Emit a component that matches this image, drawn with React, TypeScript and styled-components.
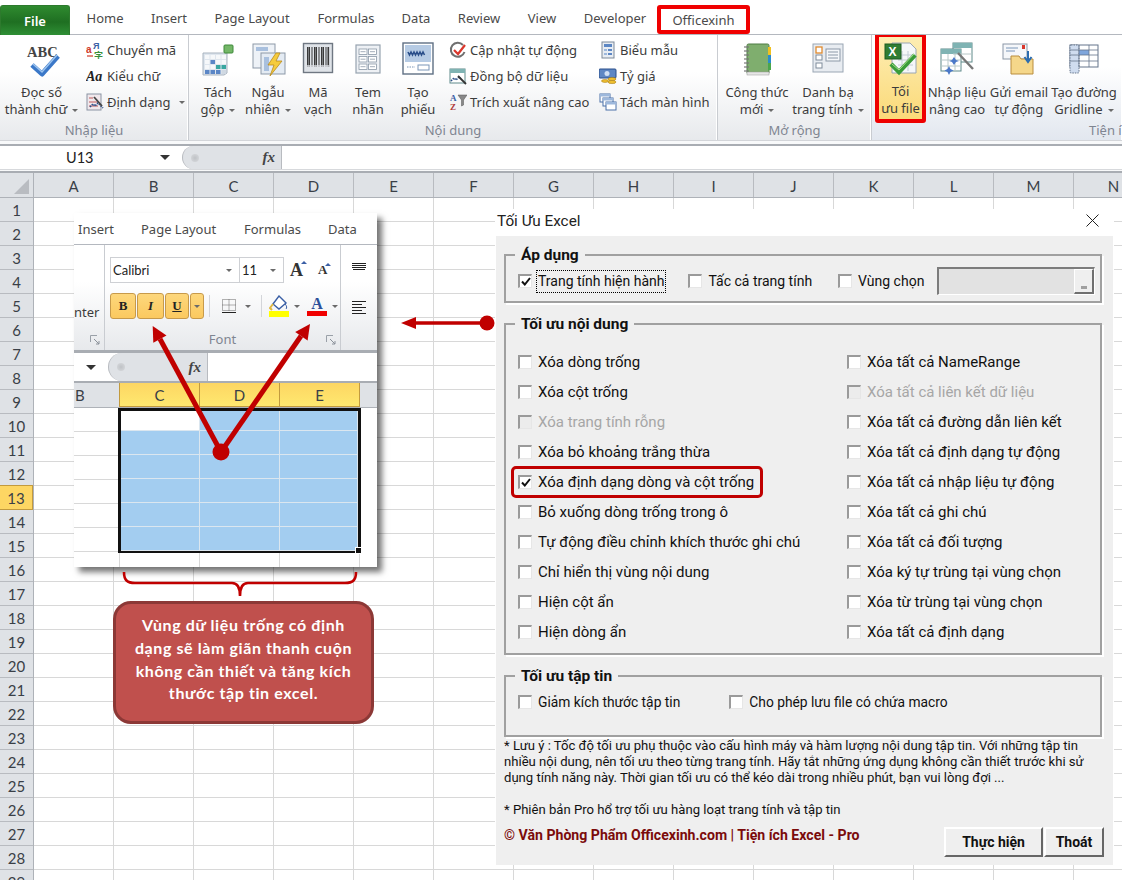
import React from "react";
import styled, { createGlobalStyle } from "styled-components";

const Global = createGlobalStyle`
  html, body { margin: 0; padding: 0; background: #fff; }
  *, *::before, *::after { box-sizing: border-box; }
`;

const UI = `"Noto Sans", "Open Sans", sans-serif`;
const CAL = `Lato, "Noto Sans", sans-serif`;
const DLG = `Roboto, "Noto Sans", sans-serif`;

const Page = styled.div`
  position: relative;
  width: 1122px;
  height: 880px;
  overflow: hidden;
  background: #fff;
  font-family: ${UI};
`;

/* ---------- Top tabs ---------- */
const TabBar = styled.div`
  display: flex;
  height: 35px;
  border-bottom: 1px solid #b4b8bf;
  align-items: flex-end;
`;
const FileTab = styled.div`
  width: 70px;
  height: 30px;
  margin-bottom: -1px;
  display: flex;
  align-items: center;
  justify-content: center;
  color: #fff;
  font-size: 13px;
  font-weight: 600;
  border: 1px solid #2d7a2d;
  border-bottom: none;
  border-radius: 3px 3px 0 0;
  background: linear-gradient(#2f8a2f, #1f6f22 55%, #2f8f35);
`;
const Tab = styled.div<{ $w: number }>`
  width: ${(p) => p.$w}px;
  height: 34px;
  display: flex;
  align-items: center;
  justify-content: center;
  color: #4a4a4a;
  font-size: 13px;
  padding-top: 1px;
`;
const MarkedTab = styled(Tab)`
  height: 29px;
  margin-left: -1px;
  padding-top: 0;
  border: 4px solid #f00000;
  border-radius: 3px;
`;

/* ---------- Ribbon ---------- */
const Ribbon = styled.div`
  display: flex;
  height: 106px;
  background: linear-gradient(#fff 35%, #e7e9ec);
  border-bottom: 1px solid #d3d5d9;
  overflow: hidden;
`;
const Group = styled.div<{ $w: number; $tint?: boolean }>`
  width: ${(p) => p.$w}px;
  flex: none;
  display: flex;
  flex-direction: column;
  border-right: 1px solid #c9ccd1;
  box-shadow: inset -1px 0 0 #fff;
  ${(p) => p.$tint && `background: linear-gradient(#fff 30%, #e2e7ef); border-right: none;`}
`;
const GroupBody = styled.div<{ $pad?: number }>`
  flex: none;
  height: 87px;
  display: flex;
  padding-left: ${(p) => p.$pad ?? 0}px;
  position: relative;
`;
const GroupLabel = styled.div<{ $cx?: string }>`
  height: 18px;
  line-height: 16px;
  text-align: center;
  font-size: 13px;
  color: #7f8591;
  white-space: nowrap;
  padding-left: ${(p) => p.$cx ?? 0};
`;
const BigBtn = styled.div<{ $w: number }>`
  width: ${(p) => p.$w}px;
  flex: none;
  display: flex;
  flex-direction: column;
  align-items: center;
  padding-top: 7px;
  color: #3c3c3c;
  font-size: 13px;
  line-height: 17px;
  text-align: center;
  white-space: nowrap;
`;
const HotBtn = styled(BigBtn)`
  position: relative;
  background: linear-gradient(#fdeeb5, #fbd977);
  outline: 4px solid #ee0000;
  outline-offset: -3px;
  border-radius: 2px;
  margin-top: -1px;
  height: 88px;
`;
const IconSlot = styled.div`
  height: 36px;
  margin-bottom: 6px;
  display: flex;
  align-items: center;
  justify-content: center;
`;
const Caret = styled.span<{ $ml?: number }>`
  display: inline-block;
  width: 0;
  height: 0;
  margin-left: ${(p) => p.$ml ?? 5}px;
  vertical-align: 2px;
  border-left: 3px solid transparent;
  border-right: 3px solid transparent;
  border-top: 3px solid #6a6a6a;
`;
const SmallCol = styled.div<{ $w: number; $pad?: number }>`
  width: ${(p) => p.$w}px;
  flex: none;
  padding: 2px 0 0 ${(p) => p.$pad ?? 0}px;
`;
const SmallBtn = styled.div`
  height: 26px;
  display: flex;
  align-items: center;
  gap: 3px;
  font-size: 13px;
  color: #3c3c3c;
  white-space: nowrap;
`;
const SmallIcon = styled.svg`
  width: 18px;
  height: 18px;
  flex: none;
`;

/* ---------- Formula bar ---------- */
const FormulaBar = styled.div`
  height: 32px;
  padding-top: 3px;
  border-bottom: 2px solid #a9adb3;
  background: #f8f9fa;
`;
const FormulaRow = styled.div`
  display: flex;
  background: #fff;
  border-top: 2px solid #a9adb3;
  height: 26px;
  border-bottom: 1px solid #d7d9dc;
`;
const NameBox = styled.div<{ $w: number; $cx: number }>`
  width: ${(p) => p.$w}px;
  flex: none;
  display: flex;
  align-items: center;
  justify-content: space-between;
  padding: 0 12px 0 ${(p) => p.$cx}px;
  font-family: ${CAL};
  font-size: 14.5px;
  color: #222;
`;
const ArrowBox = styled(NameBox)`
  justify-content: flex-end;
`;
const DownTri = styled.span`
  width: 0;
  height: 0;
  border-left: 5px solid transparent;
  border-right: 5px solid transparent;
  border-top: 5px solid #333;
`;
const FxPill = styled.div`
  width: 100px;
  flex: none;
  display: flex;
  align-items: center;
  justify-content: space-between;
  padding: 0 6px 0 8px;
  background: #dfe2e6;
  border: 1px solid #b8bbc0;
  border-radius: 14px 0 0 14px;
  border-top: none;
  border-bottom: none;
`;
const PillDot = styled.span`
  width: 8px;
  height: 8px;
  border-radius: 50%;
  background: radial-gradient(#bfc2c6, #d9dbde);
`;
const Fx = styled.span`
  font-family: "Liberation Serif", serif;
  font-style: italic;
  font-weight: 700;
  font-size: 15px;
  color: #444;
`;

/* ---------- Sheet ---------- */
const HeaderRow = styled.div`
  display: flex;
  height: 25px;
  background: #dfe2e6;
  border-bottom: 1px solid #aeb2b8;
`;
const Corner = styled.div`
  width: 34px;
  flex: none;
  border-right: 1px solid #aeb2b8;
  position: relative;
  &::after {
    content: "";
    position: absolute;
    right: 4px;
    bottom: 3px;
    border-left: 15px solid transparent;
    border-bottom: 15px solid #b9bcc1;
  }
`;
const ColHead = styled.div`
  width: 80px;
  flex: none;
  border-right: 1px solid #b8bbc0;
  display: flex;
  align-items: center;
  justify-content: center;
  padding-top: 1px;
  font-family: ${CAL};
  font-size: 15px;
  color: #3a3f47;
`;
const SheetBody = styled.div`
  display: flex;
`;
const RowHeads = styled.div`
  width: 34px;
  flex: none;
  border-right: 1px solid #aeb2b8;
`;
const RowHead = styled.div<{ $on?: boolean }>`
  height: 24px;
  display: flex;
  align-items: center;
  justify-content: center;
  font-family: ${CAL};
  font-size: 15px;
  color: #3a3f47;
  background: ${(p) => (p.$on ? "#fdd663" : "#dfe2e6")};
  border-bottom: 1px solid ${(p) => (p.$on ? "#c29a3e" : "#b8bbc0")};
  ${(p) => p.$on && "border-top: 1px solid #c29a3e; margin-top: -1px; height: 25px; border-right: 1px solid #c29a3e;"}
`;
const Cells = styled.div`
  flex: 1;
  background-image:
    linear-gradient(to bottom, transparent 23px, #d8d8d8 23px),
    linear-gradient(to right, transparent 79px, #d8d8d8 79px);
  background-size: 100% 24px, 80px 100%;
`;

/* ---------- Inset picture ---------- */
const Inset = styled.div`
  position: absolute;
  left: 74px;
  top: 213px;
  width: 303px;
  height: 354px;
  background: #fff;
  box-shadow: 5px 5px 6px rgba(0, 0, 0, 0.55);
  overflow: hidden;
  display: flex;
  flex-direction: column;
`;
const InsetTabs = styled.div`
  display: flex;
  flex: none;
  height: 32px;
  padding-left: 4px;
  align-items: center;
  border-bottom: 1px solid #b4b8bf;
`;
const InsetTab = styled.div<{ $w: number }>`
  width: ${(p) => p.$w}px;
  flex: none;
  font-size: 13px;
  color: #4a4a4a;
  white-space: nowrap;
  padding-top: 1px;
`;
const InsetRibbon = styled.div`
  display: flex;
  flex: none;
  height: 105px;
  background: linear-gradient(#fff 35%, #e7e9ec);
`;
const InsetEdge = styled.div<{ $w: number; $bar?: boolean; $top?: number }>`
  width: ${(p) => p.$w}px;
  flex: none;
  position: relative;
  display: flex;
  flex-direction: column;
  ${(p) => p.$bar && "border-right: 1px solid #c9ccd1;"}
  padding-top: ${(p) => p.$top ?? 0}px;
  align-items: center;
  font-size: 13px;
  color: #3c3c3c;
`;
const NterText = styled.div`
  margin-top: 59px;
  align-self: flex-start;
  line-height: 17px;
`;
const Launcher = styled.svg`
  position: absolute;
  right: 4px;
  bottom: 5px;
  width: 10px;
  height: 10px;
`;
const FontGroup = styled.div`
  width: 236px;
  flex: none;
  position: relative;
  border-right: 1px solid #c9ccd1;
  padding: 12px 0 0 5px;
  display: flex;
  flex-direction: column;
`;
const FontRow = styled.div`
  display: flex;
  align-items: center;
  height: 26px;
`;
const Combo = styled.div<{ $w: number }>`
  width: ${(p) => p.$w}px;
  height: 26px;
  flex: none;
  background: #fff;
  border: 1px solid #ced0d4;
  margin-right: -1px;
  display: flex;
  align-items: center;
  justify-content: space-between;
  padding: 0 7px 0 2px;
  font-family: ${CAL};
  font-size: 13px;
  color: #222;
`;
const GrowIcon = styled.span<{ $s: number; $ml: number }>`
  margin-left: ${(p) => p.$ml}px;
  font-family: "Liberation Serif", serif;
  font-weight: 700;
  font-size: ${(p) => p.$s}px;
  color: #333;
  position: relative;
  &::after {
    content: "";
    position: absolute;
    right: -4px;
    top: 1px;
    border-left: 3px solid transparent;
    border-right: 3px solid transparent;
    border-bottom: 3px solid #3a5fa5;
  }
`;
const FormatRow = styled(FontRow)`
  margin-top: 10px;
`;
const FmtBtn = styled.div<{ $w: number; $i?: boolean; $u?: boolean }>`
  width: ${(p) => p.$w}px;
  height: 26px;
  flex: none;
  display: flex;
  align-items: center;
  justify-content: center;
  margin-right: 1px;
  background: linear-gradient(#fdd77c, #fbc95f);
  border: 1px solid #c79a4a;
  border-radius: 3px;
  font-family: "Liberation Serif", serif;
  font-weight: 700;
  font-size: 13px;
  color: #222;
  font-style: ${(p) => (p.$i ? "italic" : "normal")};
  text-decoration: ${(p) => (p.$u ? "underline" : "none")};
`;
const VBar = styled.span<{ $ml: number; $mr: number }>`
  width: 1px;
  height: 22px;
  background: #d3d5d9;
  margin: 0 ${(p) => p.$mr}px 0 ${(p) => p.$ml}px;
`;
const FontColor = styled.svg`
  margin-left: 7px;
`;
const FontLabel = styled.div`
  position: absolute;
  left: 0;
  right: 0;
  bottom: 2px;
  text-align: center;
  font-size: 13px;
  color: #7f8591;
`;
const AlignIcon = styled.svg`
  width: 16px;
  height: 14px;
  margin-bottom: 24px;
`;
const InsetFormula = styled.div`
  display: flex;
  flex: none;
  height: 34px;
  border-top: 3px solid #a9adb3;
  border-bottom: 3px solid #a9adb3;
  background: #fff;
`;
const InsetHeads = styled.div`
  display: flex;
  flex: none;
  height: 25px;
  background: #dfe2e6;
  border-bottom: 1px solid #aeb2b8;
  margin-top: -1px;
`;
const InsetColHead = styled.div<{ $w: number; $on?: boolean }>`
  width: ${(p) => p.$w}px;
  flex: none;
  display: flex;
  align-items: center;
  justify-content: center;
  font-family: ${CAL};
  font-size: 15px;
  color: #3a3f47;
  ${(p) =>
    p.$on &&
    `background: linear-gradient(#fdd663, #fee86f); border-right: 1px solid #c29a3e; border-left: 1px solid #c29a3e; margin-left:-1px; border-bottom: 1px solid #c29a3e;`}
`;
const CutHead = styled(InsetColHead)`
  justify-content: flex-start;
  padding-left: 1px;
`;
const InsetGrid = styled.div`
  flex: 1;
  padding-left: 44px;
  background-image:
    linear-gradient(to right, transparent 45px, #d8d8d8 45px, #d8d8d8 46px, transparent 46px,
      transparent 125px, #d8d8d8 125px, #d8d8d8 126px, transparent 126px,
      transparent 205px, #d8d8d8 205px, #d8d8d8 206px, transparent 206px,
      transparent 285px, #d8d8d8 285px, #d8d8d8 286px, transparent 286px);
`;
const RowTicks = styled.div`
  position: absolute;
  left: 0;
  width: 44px;
  top: 195px;
  height: 144px;
  background-image: linear-gradient(to bottom, transparent 23px, #d8d8d8 23px);
  background-size: 100% 24px;
`;
const Selection = styled.div`
  position: relative;
  width: 243px;
  height: 145px;
  border: 3px solid #111;
  background: #fff;
  display: grid;
  grid-template-columns: 79px 80px 78px;
  grid-template-rows: 20px repeat(5, 24px);
  &::after {
    content: "";
    position: absolute;
    right: -3px;
    bottom: -3px;
    width: 5px;
    height: 5px;
    background: #111;
    outline: 1px solid #fff;
  }
`;
const SelCell = styled.div<{ $w?: boolean }>`
  background: ${(p) => (p.$w ? "#fff" : "#a3cdf0")};
  border-right: 1px solid #dbe6ef;
  border-bottom: 1px solid #dbe6ef;
`;

/* ---------- Annotation ---------- */
const Marks = styled.svg`
  position: absolute;
  left: 0;
  top: 0;
  pointer-events: none;
`;
const Callout = styled.div`
  position: absolute;
  left: 113px;
  top: 601px;
  width: 261px;
  height: 123px;
  padding-bottom: 6px;
  background: #c0504d;
  border: 3px solid #8c3836;
  border-radius: 18px;
  color: #fff;
  font-family: ${CAL};
  font-weight: 700;
  font-size: 16px;
  letter-spacing: 0.6px;
  line-height: 22.6px;
  text-align: center;
  white-space: nowrap;
  display: flex;
  align-items: center;
  justify-content: center;
`;

/* ---------- Dialog ---------- */
const Dialog = styled.div`
  position: absolute;
  left: 495px;
  top: 209px;
  width: 619px;
  height: 656px;
  background: #fff;
  font-family: ${DLG};
  color: #111;
`;
const TitleBar = styled.div`
  height: 27px;
  display: flex;
  align-items: center;
  justify-content: space-between;
  padding: 0 15px 4px 2px;
  font-size: 15.3px;
  color: #222;
`;
const Panel = styled.div`
  margin-left: 1px;
  width: 617px;
  height: 629px;
  background: #efefef;
  padding: 11px 0 0 8px;
`;
const Box = styled.fieldset<{ $h: number; $gap?: number }>`
  width: 598px;
  height: ${(p) => p.$h}px;
  margin: ${(p) => p.$gap ?? 0}px 0 0 0;
  padding: 0 0 0 12px;
  border: 2px solid #a0a0a0;
  min-width: 0;
  box-shadow: 2px 2px 0 #fff;
`;
const Legend = styled.legend`
  margin-left: -3px;
  padding: 0 6px;
  height: 16px;
  line-height: 16px;
  font-size: 15.5px;
  font-weight: 700;
  color: #111;
`;
const ApplyRow = styled.div`
  display: flex;
  align-items: center;
  height: 22px;
  margin-top: 7px;
`;
const Item = styled.label<{ $off?: boolean; $ml?: number; $s?: number; $boxed?: boolean }>`
  position: relative;
  display: flex;
  align-items: center;
  height: 22px;
  gap: 6px;
  font-size: ${(p) => p.$s ?? 15}px;
  white-space: nowrap;
  color: ${(p) => (p.$off ? "#a6a6a6" : "#111")};
  margin-left: ${(p) => p.$ml ?? 0}px;
  ${(p) =>
    p.$boxed &&
    `&::before { content: ""; position: absolute; left: -7px; top: -5px; width: 252px; height: 32px; border: 3px solid #c00000; border-radius: 5px; }`}
`;
const Check = styled.span<{ $off?: boolean }>`
  width: 14px;
  height: 14px;
  flex: none;
  display: flex;
  align-items: center;
  justify-content: center;
  background: ${(p) => (p.$off ? "#ececec" : "#fff")};
  border-top: 2px solid #9a9a9a;
  border-left: 2px solid #9a9a9a;
  border-right: 1px solid #e6e6e6;
  border-bottom: 1px solid #e6e6e6;
`;
const Focused = styled.span`
  outline: 1px dotted #000;
  outline-offset: 1px;
  line-height: 19px;
`;
const RangeBox = styled.div`
  width: 158px;
  height: 28px;
  margin-left: 13px;
  display: flex;
  justify-content: flex-end;
  background: #e2e2e2;
  border-top: 2px solid #7c7c7c;
  border-left: 2px solid #7c7c7c;
  border-right: 1px solid #fff;
  border-bottom: 1px solid #fff;
`;
const RangeBtn = styled.div`
  width: 20px;
  height: 25px;
  border: 1px solid #fff;
  border-right: 2px solid #707070;
  border-bottom: 2px solid #707070;
  background: #efefef;
  display: flex;
  align-items: flex-end;
  justify-content: center;
  padding-bottom: 3px;
  &::after {
    content: "";
    width: 6px;
    height: 3px;
    background: #a0a0a0;
  }
`;
const OptionGrid = styled.div`
  display: grid;
  grid-template-columns: 329px 1fr;
  grid-auto-rows: 30px;
  align-items: center;
  margin-top: 15px;
`;
const Notes = styled.div`
  margin-top: 1px;
  font-size: 13.1px;
  line-height: 16px;
  white-space: nowrap;
  color: #111;
`;
const Spacer = styled.div`
  height: 16px;
`;
const Footer = styled.div`
  display: flex;
  justify-content: space-between;
  width: 600px;
  margin-top: 9px;
`;
const Brand = styled.div`
  font-size: 14.1px;
  font-weight: 700;
  line-height: 16px;
  color: #7b0b0b;
  white-space: nowrap;
`;
const Buttons = styled.div`
  display: flex;
  gap: 1px;
`;
const DlgBtn = styled.div<{ $w: number }>`
  width: ${(p) => p.$w}px;
  height: 30px;
  display: flex;
  align-items: center;
  justify-content: center;
  font-size: 14px;
  font-weight: 700;
  background: #efefef;
  border-top: 2px solid #fff;
  border-left: 2px solid #fff;
  border-right: 2px solid #666;
  border-bottom: 2px solid #666;
`;

/* ---------- Icons ---------- */
const Big = ({ children, w = 36 }: { children: React.ReactNode; w?: number }) => (
  <svg width={w} height={36} viewBox={`0 0 ${w} 36`}>{children}</svg>
);
const IAbc = () => (
  <Big w={40}>
    <text x="5" y="15" fontFamily="Liberation Serif" fontWeight="700" fontSize="14.5" fill="#444">ABC</text>
    <path d="M10 23 L20 32 L36 14" fill="none" stroke="#3b78c8" strokeWidth="5" strokeLinejoin="round" />
    <path d="M11 22 L20 30 L35 13" fill="none" stroke="#9cc4ef" strokeWidth="1.5" />
  </Big>
);
const ISplit = () => (
  <Big>
    <path d="M3 11 H27 V31 L24 33 H3Z" fill="#dfe6ee" stroke="#a8b3bf" />
    {[0, 1, 2, 3].map((r) => [0, 1, 2, 3].map((c) => (
      <rect key={`${r}${c}`} x={5 + c * 5.5} y={13 + r * 5} width="4.5" height="4" fill={r === 3 ? (c === 3 ? "#cfd8e2" : "#5b86c6") : r === 2 && c > 1 ? "#38a6a0" : r === 1 && c === 1 ? "#5b86c6" : "#f6f8fa"} />
    )))}
    <rect x="24" y="3" width="9" height="8" rx="1" fill="#74b768" stroke="#3e8a3a" />
  </Big>
);
const IRandom = () => (
  <Big>
    <rect x="3" y="2" width="22" height="24" fill="#eef2f7" stroke="#8d99a8" />
    <rect x="6" y="5" width="12" height="4" fill="#a9c0de" />
    <rect x="11" y="11" width="24" height="21" fill="#e4ebf3" stroke="#8d99a8" />
    <rect x="14" y="15" width="5" height="14" fill="#a9c0de" />
    <path d="M26 11 L18 23 H24 L20 34 L32 19 H26 L30 11Z" fill="#f5cb3d" stroke="#b98a1e" strokeWidth=".8" />
  </Big>
);
const IBarcode = () => (
  <Big w={32}>
    <rect x="1.5" y="1.5" width="29" height="29" fill="#dfe3e8" stroke="#6f7782" strokeWidth="1.4" />
    {[5, 7, 9.5, 12, 14, 16.5, 19, 21, 23.5, 25.5].map((x, i) => (
      <rect key={x} x={x} y="5" width={i % 3 === 0 ? 1.6 : 1} height="20" fill="#3a3a3a" />
    ))}
    <rect x="5" y="23" width="22" height="3" fill="#dfe3e8" opacity=".7" />
  </Big>
);
const ILabel = () => (
  <Big w={28}>
    <rect x="2" y="3" width="24" height="28" fill="#eef1f5" stroke="#97a3b0" strokeWidth="1.2" />
    {[0, 1, 2].map((r) => [0, 1].map((c) => (
      <g key={`${r}${c}`}>
        <rect x={5 + c * 9.5} y={7 + r * 7.5} width="8" height="5.5" fill="#fff" stroke="#8b98a7" strokeWidth=".8" />
        <path d={`M${6.5 + c * 9.5} ${9.7 + r * 7.5}h5`} stroke="#8b98a7" strokeWidth=".8" />
      </g>
    )))}
  </Big>
);
const ITicket = () => (
  <Big w={32}>
    <rect x="1" y="1" width="30" height="31" fill="#fff" stroke="#5f6f84" strokeWidth="1.4" />
    <rect x="3" y="3" width="26" height="17" fill="#b6cbe4" />
    <path d="M6 10 l1.5 3 1.5 -3 1.5 3 1.5 -3 1.5 3 1.5 -3 1.5 3 1.5 -3 1.5 3 1.5 -3 1.5 3" stroke="#2b4f8a" strokeWidth="1.6" fill="none" />
    <path d="M5 25 h8" stroke="#7b96b8" strokeWidth="1.2" strokeDasharray="1.5 1" />
    <rect x="16" y="23" width="11" height="5" fill="#fff" stroke="#7b96b8" />
  </Big>
);
const INotebook = () => (
  <Big w={30}>
    <rect x="5" y="2" width="22" height="30" rx="1.5" fill="#7fae6e" stroke="#4f7d44" />
    <rect x="5" y="30" width="22" height="3" fill="#e6e6e6" stroke="#999" strokeWidth=".5" />
    <rect x="26" y="5" width="3" height="8" fill="#f0c020" />
    <rect x="26" y="13" width="3" height="8" fill="#2b8ccc" />
    <rect x="26" y="21" width="3" height="7" fill="#4ba64b" />
    {[5, 9, 13, 17, 21, 25, 29].map((y) => <path key={y} d={`M2 ${y}h5`} stroke="#777" strokeWidth="1.2" />)}
  </Big>
);
const IContacts = () => (
  <Big w={32}>
    <rect x="1" y="2" width="30" height="28" fill="#e8ecf1" stroke="#9aa6b3" />
    <rect x="4" y="5" width="6" height="6" fill="#fff" stroke="#e08a2e" strokeWidth="1.3" />
    <rect x="4" y="13" width="6" height="5" fill="#fff" stroke="#7f8c9b" />
    <rect x="4" y="21" width="6" height="5" fill="#fff" stroke="#7f8c9b" />
    <rect x="14" y="7" width="14" height="12" fill="#f5f7fa" stroke="#8b98a7" />
    <path d="M16 10h10M16 13h10M16 16h10" stroke="#8b98a7" />
  </Big>
);
const IOptimize = () => (
  <Big w={34}>
    <path d="M8 2 H26 L32 8 V32 H8Z" fill="#f5f7f9" stroke="#9aa6b3" />
    <path d="M14 14h15M14 19h15M14 24h15M18 10v20M24 10v20" stroke="#c3ccd6" />
    <rect x="1" y="3" width="16" height="15" fill="#2f7d32" stroke="#1d5c20" />
    <text x="4.5" y="15" fontFamily="Liberation Sans" fontWeight="700" fontSize="12" fill="#fff">X</text>
    <path d="M7 23 L15 31 L31 14" fill="none" stroke="#3a9c3a" strokeWidth="4.5" />
    <path d="M8 23 L15 29 L30 13" fill="none" stroke="#a8e08a" strokeWidth="1" />
  </Big>
);
const IAdvanced = () => (
  <Big w={34}>
    <rect x="13" y="1" width="19" height="19" fill="#fff" stroke="#5e8a8a" />
    <rect x="13" y="1" width="19" height="5" fill="#7fb3b3" />
    <rect x="1" y="7" width="20" height="22" fill="#fff" stroke="#5e8a8a" />
    <rect x="1" y="7" width="20" height="5" fill="#7fb3b3" />
    <path d="M1 18h20M1 24h20M8 12v17M15 12v17M13 12h19" stroke="#b8c8c8" />
    <path d="M18 11 L33 27" stroke="#777" strokeWidth="2.4" />
    <path d="M14 15l2 3 3 1-3 1-2 3-2-3-3-1 3-1zM9 24l1.5 3 3 1.5-3 1.5-1.5 3-1.5-3-3-1.5 3-1.5z" fill="#4b78c8" />
  </Big>
);
const IMail = () => (
  <Big w={34}>
    <rect x="1" y="2" width="24" height="15" fill="#f5f7fa" stroke="#8b98a7" />
    <path d="M4 6h12M4 9h9" stroke="#7b96b8" />
    <rect x="20" y="3" width="3" height="4" fill="#d9372c" />
    <path d="M9 14 H17 L19 17 H31 V32 H9Z" fill="#f5d78a" stroke="#b98d3e" />
    <path d="M26 9 V18 M22.5 15 L26 20 L29.5 15" stroke="#2b6cb0" strokeWidth="2" fill="none" />
  </Big>
);
const IGridline = () => (
  <Big w={32}>
    <rect x="2" y="3" width="28" height="22" fill="#fff" stroke="#64748b" />
    <rect x="2" y="3" width="9" height="28" rx="1" fill="#cfdcef" stroke="#64748b" strokeDasharray="1.5 1" />
    <rect x="11" y="8" width="10" height="5" fill="#7fa6dc" />
    <path d="M2 8h28M2 13h28M2 19h28M11 3v22M21 3v22" stroke="#64748b" strokeWidth=".8" />
  </Big>
);
const SConvert = () => (
  <SmallIcon viewBox="0 0 18 18">
    <text x="0" y="12" fontFamily="Liberation Sans" fontWeight="700" fontSize="10" fill="#d0392b">a</text>
    <text x="7" y="8" fontFamily="Liberation Sans" fontWeight="700" fontSize="9" fill="#3a5fa5">Я</text>
    <text x="8" y="18" fontFamily="Noto Sans CJK SC" fontWeight="700" fontSize="9" fill="#3a8f3a">字</text>
    <path d="M1 15h6" stroke="#d0392b" strokeWidth="1.2" />
  </SmallIcon>
);
const SFont = () => (
  <SmallIcon viewBox="0 0 18 18">
    <text x="0" y="14" fontFamily="Liberation Serif" fontStyle="italic" fontWeight="700" fontSize="14" fill="#222">Aa</text>
  </SmallIcon>
);
const SFormat = () => (
  <SmallIcon viewBox="0 0 18 18">
    <rect x="1" y="1" width="14" height="16" fill="#f1e8ec" stroke="#8a94a3" />
    <path d="M3 5h4M3 9h8M3 13h9" stroke="#c05a5a" />
    <path d="M4 14l3-3 2 2 3-3 2 2 3 3" stroke="#2b4f8a" strokeWidth="1.6" fill="none" strokeDasharray="1.5 1" />
    <path d="M8 4 L16 13" stroke="#444" strokeWidth="1.8" />
  </SmallIcon>
);
const SUpdate = () => (
  <SmallIcon viewBox="0 0 18 18">
    <path d="M14 4 A7 7 0 1 0 15.5 11" fill="none" stroke="#6f6f6f" strokeWidth="2" />
    <path d="M5 9 L9 13 L16 4" fill="none" stroke="#d9372c" strokeWidth="2.2" />
  </SmallIcon>
);
const SSync = () => (
  <SmallIcon viewBox="0 0 18 18">
    <rect x="1" y="2" width="15" height="14" fill="#fff" stroke="#5e8a8a" />
    <rect x="1" y="2" width="15" height="4" fill="#7fb3b3" />
    <path d="M2 14l3-3 2 2 3-3 2 2" stroke="#2b4f8a" strokeWidth="1.6" fill="none" strokeDasharray="1.5 1" />
    <path d="M9 9 L17 17" stroke="#333" strokeWidth="1.8" />
  </SmallIcon>
);
const SFilter = () => (
  <SmallIcon viewBox="0 0 18 18">
    <text x="1" y="8" fontFamily="Liberation Serif" fontWeight="700" fontSize="9" fill="#3a5fa5">A</text>
    <text x="1" y="17" fontFamily="Liberation Serif" fontWeight="700" fontSize="9" fill="#b03a3a">Z</text>
    <path d="M9 2 H18 L14.5 7 V12 L12.5 13 V7Z" fill="#888" stroke="#555" strokeWidth=".5" />
  </SmallIcon>
);
const SForm = () => (
  <SmallIcon viewBox="0 0 18 18">
    <rect x="3" y="1" width="12" height="16" fill="#e8edf3" stroke="#7c8999" />
    <rect x="5" y="3" width="8" height="3" fill="#5d87c4" />
    <path d="M5 8h3v2H5zM5 12h3v2H5z" fill="#9db8dc" />
    <path d="M9 8h4v2H9zM9 12h4v2H9z" fill="#5d87c4" />
  </SmallIcon>
);
const SRate = () => (
  <SmallIcon viewBox="0 0 18 18">
    <rect x="0" y="2" width="17" height="9" rx="1" fill="#5d87c4" stroke="#2b4f8a" />
    <circle cx="8" cy="6.5" r="2.5" fill="#cfe0f5" />
    <ellipse cx="13" cy="12" rx="4" ry="1.6" fill="#f0c030" stroke="#a87d18" strokeWidth=".6" />
    <ellipse cx="13" cy="15" rx="4" ry="1.6" fill="#f0c030" stroke="#a87d18" strokeWidth=".6" />
    <ellipse cx="6" cy="14" rx="3.5" ry="1.4" fill="#f0c030" stroke="#a87d18" strokeWidth=".6" />
  </SmallIcon>
);
const SWindows = () => (
  <SmallIcon viewBox="0 0 18 18">
    <rect x="1" y="1" width="10" height="8" fill="#fff" stroke="#4a70a8" />
    <rect x="1" y="1" width="10" height="2.5" fill="#9db8dc" />
    <rect x="4" y="5" width="10" height="8" fill="#fff" stroke="#4a70a8" />
    <rect x="4" y="5" width="10" height="2.5" fill="#9db8dc" />
    <rect x="7" y="9" width="10" height="8" fill="#fff" stroke="#4a70a8" />
    <rect x="7" y="9" width="10" height="2.5" fill="#9db8dc" />
  </SmallIcon>
);
const Tick = () => (
  <svg width="10" height="9" viewBox="0 0 10 9">
    <path d="M1 4.5 L3.8 7.5 L9 1" fill="none" stroke="#111" strokeWidth="2" />
  </svg>
);
const LauncherIcon = () => (
  <Launcher viewBox="0 0 10 10">
    <path d="M.5 .5H7M.5 .5V7" stroke="#9aa0a8" fill="none" />
    <path d="M4 4L9 9M6 9H9V6" stroke="#8a9099" fill="none" />
  </Launcher>
);
const Lines = ({ wide }: { wide?: boolean }) => (
  <AlignIcon viewBox="0 0 16 14">
    {wide ? (
      <path d="M1 1.5h14M1 3.5h14M1 5.5h14M2 7.5h12" stroke="#222" />
    ) : (
      <path d="M1 1.5h14M1 4.5h10M1 7.5h14M1 10.5h10M1 13.5h14" stroke="#222" />
    )}
  </AlignIcon>
);

/* ---------- Data ---------- */
const COLS = "ABCDEFGHIJKLMN".split("");
const ROWS = Array.from({ length: 29 }, (_, i) => i + 1);
const LEFT: [string, boolean?, boolean?][] = [
  ["Xóa dòng trống"],
  ["Xóa cột trống"],
  ["Xóa trang tính rỗng", true],
  ["Xóa bỏ khoảng trắng thừa"],
  ["Xóa định dạng dòng và cột trống", false, true],
  ["Bỏ xuống dòng trống trong ô"],
  ["Tự động điều chỉnh khích thước ghi chú"],
  ["Chỉ hiển thị vùng nội dung"],
  ["Hiện cột ẩn"],
  ["Hiện dòng ẩn"],
];
const RIGHT: [string, boolean?][] = [
  ["Xóa tất cả NameRange"],
  ["Xóa tất cả liên kết dữ liệu", true],
  ["Xóa tất cả đường dẫn liên kết"],
  ["Xóa tất cả định dạng tự động"],
  ["Xóa tất cả nhập liệu tự động"],
  ["Xóa tất cả ghi chú"],
  ["Xóa tất cả đối tượng"],
  ["Xóa ký tự trùng tại vùng chọn"],
  ["Xóa từ trùng tại vùng chọn"],
  ["Xóa tất cả định dạng"],
];

export default function App() {
  return (
    <Page>
      <Global />
      <TabBar>
        <FileTab>File</FileTab>
        <Tab $w={70}>Home</Tab>
        <Tab $w={58}>Insert</Tab>
        <Tab $w={108}>Page Layout</Tab>
        <Tab $w={80}>Formulas</Tab>
        <Tab $w={60}>Data</Tab>
        <Tab $w={66}>Review</Tab>
        <Tab $w={60}>View</Tab>
        <Tab $w={86}>Developer</Tab>
        <MarkedTab $w={93}>Officexinh</MarkedTab>
      </TabBar>

      <Ribbon>
        <Group $w={189}>
          <GroupBody>
            <BigBtn $w={83}>
              <IconSlot><IAbc /></IconSlot>
              <div>Đọc số</div>
              <div>thành chữ<Caret /></div>
            </BigBtn>
            <SmallCol $w={105} $pad={3}>
              <SmallBtn><SConvert />Chuyển mã</SmallBtn>
              <SmallBtn><SFont />Kiểu chữ</SmallBtn>
              <SmallBtn><SFormat />Định dạng<Caret /></SmallBtn>
            </SmallCol>
          </GroupBody>
          <GroupLabel>Nhập liệu</GroupLabel>
        </Group>

        <Group $w={529}>
          <GroupBody $pad={4}>
            <BigBtn $w={50}><IconSlot><ISplit /></IconSlot><div>Tách</div><div>gộp<Caret /></div></BigBtn>
            <BigBtn $w={50}><IconSlot><IRandom /></IconSlot><div>Ngẫu</div><div>nhiên<Caret /></div></BigBtn>
            <BigBtn $w={50}><IconSlot><IBarcode /></IconSlot><div>Mã</div><div>vạch</div></BigBtn>
            <BigBtn $w={50}><IconSlot><ILabel /></IconSlot><div>Tem</div><div>nhãn</div></BigBtn>
            <BigBtn $w={50}><IconSlot><ITicket /></IconSlot><div>Tạo</div><div>phiếu</div></BigBtn>
            <SmallCol $w={156} $pad={6}>
              <SmallBtn><SUpdate />Cập nhật tự động</SmallBtn>
              <SmallBtn><SSync />Đồng bộ dữ liệu</SmallBtn>
              <SmallBtn><SFilter />Trích xuất nâng cao</SmallBtn>
            </SmallCol>
            <SmallCol $w={115}>
              <SmallBtn><SForm />Biểu mẫu</SmallBtn>
              <SmallBtn><SRate />Tỷ giá</SmallBtn>
              <SmallBtn><SWindows />Tách màn hình</SmallBtn>
            </SmallCol>
          </GroupBody>
          <GroupLabel>Nội dung</GroupLabel>
        </Group>

        <Group $w={154}>
          <GroupBody $pad={4}>
            <BigBtn $w={70}><IconSlot><INotebook /></IconSlot><div>Công thức</div><div>mới<Caret /></div></BigBtn>
            <BigBtn $w={72}><IconSlot><IContacts /></IconSlot><div>Danh bạ</div><div>trang tính<Caret /></div></BigBtn>
          </GroupBody>
          <GroupLabel>Mở rộng</GroupLabel>
        </Group>

        <Group $w={250} $tint>
          <GroupBody $pad={4}>
            <HotBtn $w={49}><IconSlot><IOptimize /></IconSlot><div>Tối</div><div>ưu file</div></HotBtn>
            <BigBtn $w={64}><IconSlot><IAdvanced /></IconSlot><div>Nhập liệu</div><div>nâng cao</div></BigBtn>
            <BigBtn $w={60}><IconSlot><IMail /></IconSlot><div>Gửi email</div><div>tự động</div></BigBtn>
            <BigBtn $w={70}><IconSlot><IGridline /></IconSlot><div>Tạo đường</div><div>Gridline<Caret /></div></BigBtn>
          </GroupBody>
          <GroupLabel $cx="217px">Tiện ích</GroupLabel>
        </Group>
      </Ribbon>

      <FormulaBar>
        <FormulaRow>
          <NameBox $w={182} $cx={66}>U13<DownTri /></NameBox>
          <FxPill><PillDot /><Fx>fx</Fx></FxPill>
        </FormulaRow>
      </FormulaBar>

      <HeaderRow>
        <Corner />
        {COLS.map((c) => <ColHead key={c}>{c}</ColHead>)}
      </HeaderRow>
      <SheetBody>
        <RowHeads>
          {ROWS.map((r) => <RowHead key={r} $on={r === 13}>{r}</RowHead>)}
        </RowHeads>
        <Cells />
      </SheetBody>

      <Inset>
        <InsetTabs>
          <InsetTab $w={63}>Insert</InsetTab>
          <InsetTab $w={103}>Page Layout</InsetTab>
          <InsetTab $w={84}>Formulas</InsetTab>
          <InsetTab $w={40}>Data</InsetTab>
        </InsetTabs>
        <InsetRibbon>
          <InsetEdge $w={31} $bar>
            <NterText>nter</NterText>
            <LauncherIcon />
          </InsetEdge>
          <FontGroup>
            <FontRow>
              <Combo $w={130}>Calibri<Caret /></Combo>
              <Combo $w={45}>11<Caret /></Combo>
              <GrowIcon $s={18} $ml={7}>A</GrowIcon>
              <GrowIcon $s={13} $ml={15}>A</GrowIcon>
            </FontRow>
            <FormatRow>
              <FmtBtn $w={26}>B</FmtBtn>
              <FmtBtn $w={27} $i>I</FmtBtn>
              <FmtBtn $w={24} $u>U</FmtBtn>
              <FmtBtn $w={14}><Caret $ml={0} /></FmtBtn>
              <VBar $ml={4} $mr={12} />
              <svg width="14" height="14" viewBox="0 0 14 14">
                <path d="M.5 .5h13v11H.5zM7 .5v11M.5 6h13" fill="none" stroke="#666" strokeDasharray="1 1" />
                <path d="M0 13.5h14" stroke="#222" />
              </svg>
              <Caret $ml={9} />
              <VBar $ml={10} $mr={7} />
              <svg width="20" height="22" viewBox="0 0 20 22">
                <path d="M10 1 L17 8 L10 14 L4 9Z" fill="#fff" stroke="#3a5fa5" strokeWidth="1.4" />
                <path d="M4 9 L1 13 L3 15" fill="none" stroke="#e0b840" strokeWidth="2" />
                <path d="M16 9 C18 11 18 13 17 14" stroke="#3a5fa5" fill="none" />
                <rect x="0" y="16" width="20" height="6" fill="#ffff00" />
              </svg>
              <Caret />
              <FontColor width="20" height="22" viewBox="0 0 20 22">
                <text x="10" y="14" textAnchor="middle" fontFamily="Liberation Serif" fontWeight="700" fontSize="16" fill="#2b4f9a">A</text>
                <rect x="0" y="16" width="20" height="5" fill="#f00000" />
              </FontColor>
              <Caret />
            </FormatRow>
            <FontLabel>Font</FontLabel>
            <LauncherIcon />
          </FontGroup>
          <InsetEdge $w={36} $top={17}>
            <Lines wide />
            <Lines />
          </InsetEdge>
        </InsetRibbon>
        <InsetFormula>
          <ArrowBox $w={34} $cx={0}><DownTri /></ArrowBox>
          <FxPill><PillDot /><Fx>fx</Fx></FxPill>
        </InsetFormula>
        <InsetHeads>
          <CutHead $w={46}>B</CutHead>
          <InsetColHead $w={81} $on>C</InsetColHead>
          <InsetColHead $w={81} $on>D</InsetColHead>
          <InsetColHead $w={81} $on>E</InsetColHead>
        </InsetHeads>
        <InsetGrid>
          <Selection>
            {Array.from({ length: 18 }, (_, i) => <SelCell key={i} $w={i === 0} />)}
          </Selection>
        </InsetGrid>
        <RowTicks />
      </Inset>

      <Marks width="1122" height="880" viewBox="0 0 1122 880">
        <g fill="#c00000" stroke="none">
          <path d="M221 452 L160 339" stroke="#c00000" strokeWidth="5" />
          <polygon points="152.7,326 166.5,335.6 153.3,342.8" />
          <path d="M221 452 L301 336" stroke="#c00000" strokeWidth="5" />
          <polygon points="310,324 307.6,340.6 295.2,332" />
          <circle cx="221" cy="452" r="8.5" />
          <path d="M487 323 H414" stroke="#c00000" strokeWidth="3.5" />
          <polygon points="401,323 416,317 416,329" />
          <circle cx="487" cy="323" r="7.5" />
        </g>
        <path
          d="M124 572 C124 580 127 583 135 583 L232 583 C237 583 240 587 240 596 C240 587 243 583 248 583 L345 583 C353 583 356 580 356 572"
          fill="none"
          stroke="#c00000"
          strokeWidth="2.6"
        />
      </Marks>

      <Callout>
        <div>
          Vùng dữ liệu trống có định<br />
          dạng sẽ làm giãn thanh cuộn<br />
          không cần thiết và tăng kích<br />
          thước tập tin excel.
        </div>
      </Callout>

      <Dialog>
        <TitleBar>
          Tối Ưu Excel
          <svg width="13" height="13" viewBox="0 0 13 13">
            <path d="M.5 .5 L12.5 12.5 M12.5 .5 L.5 12.5" stroke="#222" strokeWidth="1" />
          </svg>
        </TitleBar>
        <Panel>
          <Box $h={56}>
            <Legend>Áp dụng</Legend>
            <ApplyRow>
              <Item $s={14}>
                <Check><Tick /></Check>
                <Focused>Trang tính hiện hành</Focused>
              </Item>
              <Item $s={14} $ml={24}><Check />Tấc cả trang tính</Item>
              <Item $s={14} $ml={26}><Check />Vùng chọn</Item>
              <RangeBox><RangeBtn /></RangeBox>
            </ApplyRow>
          </Box>
          <Box $h={339} $gap={13}>
            <Legend>Tối ưu nội dung</Legend>
            <OptionGrid>
              {LEFT.map(([t, off, boxed], i) => (
                <React.Fragment key={t}>
                  <Item $off={off} $boxed={boxed}>
                    <Check $off={off}>{boxed && <Tick />}</Check>{t}
                  </Item>
                  <Item $off={RIGHT[i][1]}>
                    <Check $off={RIGHT[i][1]} />{RIGHT[i][0]}
                  </Item>
                </React.Fragment>
              ))}
            </OptionGrid>
          </Box>
          <Box $h={69} $gap={13}>
            <Legend>Tối ưu tập tin</Legend>
            <ApplyRow>
              <Item $s={13.8}><Check />Giảm kích thước tập tin</Item>
              <Item $s={13.8} $ml={49}><Check />Cho phép lưu file có chứa macro</Item>
            </ApplyRow>
          </Box>
          <Notes>
            <div>* Lưu ý : Tốc độ tối ưu phụ thuộc vào cấu hình máy và hàm lượng nội dung tập tin. Với những tập tin</div>
            <div>nhiều nội dung, nên tối ưu theo từng trang tính. Hãy tắt những ứng dụng không cần thiết trước khi sử</div>
            <div>dụng tính năng này. Thời gian tối ưu có thể kéo dài trong nhiều phút, bạn vui lòng đợi ...</div>
            <Spacer />
            <div>* Phiên bản Pro hổ trợ tối ưu hàng loạt trang tính và tập tin</div>
          </Notes>
          <Footer>
            <Brand>© Văn Phòng Phẩm Officexinh.com | Tiện ích Excel - Pro</Brand>
            <Buttons>
              <DlgBtn $w={99}>Thực hiện</DlgBtn>
              <DlgBtn $w={60}>Thoát</DlgBtn>
            </Buttons>
          </Footer>
        </Panel>
      </Dialog>
    </Page>
  );
}
